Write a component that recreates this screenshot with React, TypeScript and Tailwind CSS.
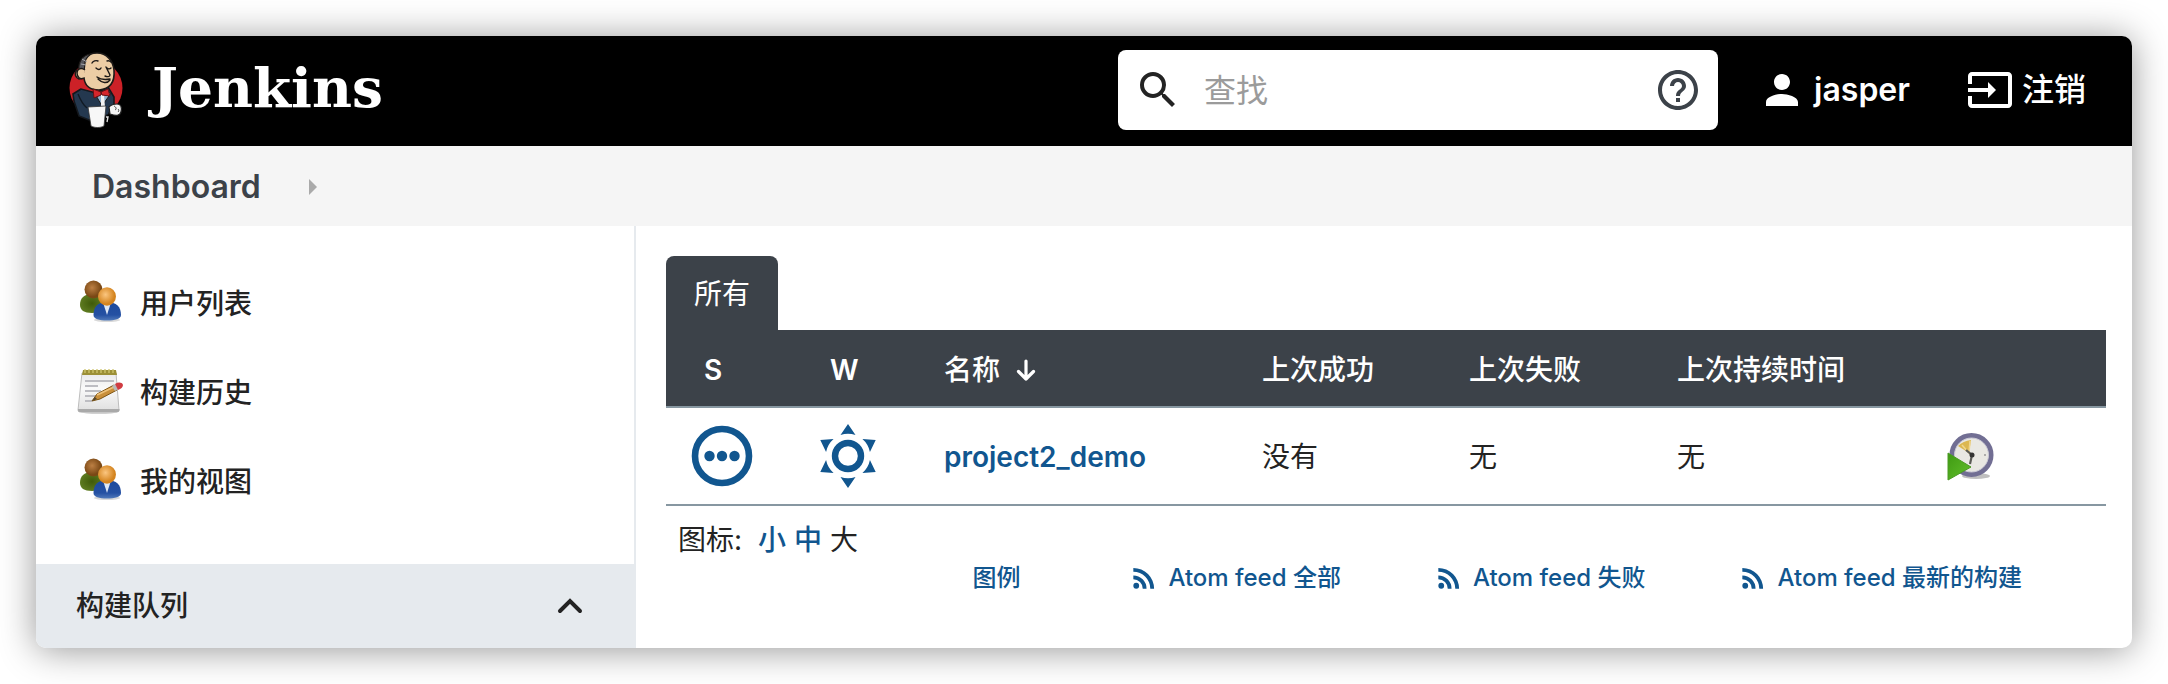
import React from "react";

const LINK = "font-medium text-[#11568f] hover:underline";

function Glyph({ d, className }: { d: string; className: string }) {
  return (
    <svg viewBox="0 0 24 24" fill="currentColor" aria-hidden="true" className={className}>
      <path d={d} />
    </svg>
  );
}

const SEARCH =
  "M15.5 14h-.79l-.28-.27A6.471 6.471 0 0 0 16 9.5 6.5 6.5 0 1 0 9.5 16c1.61 0 3.09-.59 4.23-1.57l.27.28v.79l5 4.99L20.49 19l-4.99-5zm-6 0C7.01 14 5 11.99 5 9.5S7.01 5 9.5 5 14 7.01 14 9.5 11.99 14 9.5 14z";
const HELP =
  "M11 18h2v-2h-2v2zm1-16C6.48 2 2 6.48 2 12s4.48 10 10 10 10-4.48 10-10S17.52 2 12 2zm0 18c-4.41 0-8-3.59-8-8s3.59-8 8-8 8 3.59 8 8-3.59 8-8 8zm0-14c-2.21 0-4 1.79-4 4h2c0-1.1.9-2 2-2s2 .9 2 2c0 2-3 1.75-3 5h2c0-2.25 3-2.5 3-5 0-2.21-1.79-4-4-4z";
const PERSON =
  "M12 12c2.21 0 4-1.79 4-4s-1.79-4-4-4-4 1.79-4 4 1.79 4 4 4zm0 2c-2.67 0-8 1.34-8 4v2h16v-2c0-2.66-5.33-4-8-4z";
const LOGOUT =
  "M21 3.01H3c-1.1 0-2 .9-2 2V9h2V4.99h18v14.03H3V15H1v4.01c0 1.1.9 1.98 2 1.98h18c1.1 0 2-.88 2-1.98v-14c0-1.11-.9-2-2-2zM11 16l4-4-4-4v3H1v2h10v3z";
const RSS =
  "M6.18 15.64a2.18 2.18 0 1 1 0 4.36 2.18 2.18 0 0 1 0-4.36M4 4.44A15.56 15.56 0 0 1 19.56 20h-2.83A12.73 12.73 0 0 0 4 7.27V4.44m0 5.66a9.9 9.9 0 0 1 9.9 9.9h-2.83A7.07 7.07 0 0 0 4 12.93V10.1z";

function Butler() {
  return (
    <svg viewBox="0 0 56 78" aria-hidden="true" className="h-[78px] w-14 shrink-0">
      <ellipse cx="28" cy="37" rx="26.5" ry="27" fill="#cc2127" />
      <path d="M13 38 5 43 6 50 11 65 21 69 36 66 41 62 46 54 46 46 40 36 28 42Z" fill="#24384f" stroke="#14181d" strokeWidth="1.6" />
      <path d="M11 28c-3-1-5-5-3-8l4-1C12 8 20 2 29 2c10 0 16 8 17 17 1 12-4 19-15 20-9 0-14-4-15-12Z" fill="#eccda5" stroke="#1d1a18" strokeWidth="1.6" />
      <path d="M11 19C10 10 15 4 23 3c-4 3-6 6-6 9l-1 9-3 1Z" fill="#55565b" stroke="#1d1a18" strokeWidth="1.2" />
      <path d="m14 8 5 3m-6 2 5 1" stroke="#a5a6aa" strokeWidth="1" />
      <path d="M17 19c-4-3-8-1-8 3s3 7 7 5" fill="#eccda5" stroke="#1d1a18" strokeWidth="1.5" />
      <path d="M24 12c1-2 4-3 6-2m9 0c2-1 3 0 4 1M28 17c2 2 4 2 5 0m6 0c1 1 3 1 4 0M38 16l4 8c0 2-3 2-5 1m-7 3c4 4 9 5 12 1M29 26c4 3 8 3 13 2" fill="none" stroke="#1d1a18" strokeWidth="1.4" strokeLinecap="round" />
      <path d="M26 41 34 55 43 42 38 40Z" fill="#8fb0cd" stroke="#1d1a18" strokeWidth="1" />
      <path d="m33 44 3 0 1 12-4 0Z" fill="#f2f2f2" />
      <path d="m25 38 8 3 0 3-7 3Zm8 3 7-3 2 7-8-1Z" fill="#d6262c" stroke="#641013" strokeWidth="1" />
      <path d="M10 43c2 5 4 10 9 14" fill="none" stroke="#111a24" strokeWidth="1.4" />
      <path d="M19 56h21v7l-18 4Z" fill="#24384f" />
      <path d="M41 56c2-2 5-3 8-3 4 0 5 3 4 8-1 4-5 4-11 2Z" fill="#f4f4f4" stroke="#222" strokeWidth="1.2" />
      <path d="M46 55c2 1 3 3 1 4m3-1c1 1 1 2 0 3" fill="none" stroke="#444" />
      <path d="m20 56 18-1-2 20c-4 2-9 2-13 0Z" fill="#f7f7f7" stroke="#333" strokeWidth=".8" />
      <path d="M38 66h2l-1 5" fill="none" stroke="#ddd" strokeWidth="1.4" />
    </svg>
  );
}

function PeopleIcon({ id }: { id: string }) {
  return (
    <svg viewBox="0 0 48 48" aria-hidden="true" className="size-12 shrink-0">
      <defs>
        <radialGradient id={`${id}-brown`} cx=".42" cy=".4">
          <stop offset="0" stopColor="#bd8044" />
          <stop offset="1" stopColor="#7a4815" />
        </radialGradient>
        <radialGradient id={`${id}-orange`} cx=".42" cy=".4">
          <stop offset="0" stopColor="#fbc680" />
          <stop offset="1" stopColor="#d4841f" />
        </radialGradient>
        <radialGradient id={`${id}-green`}>
          <stop offset="0" stopColor="#3f5a0a" />
          <stop offset="1" stopColor="#5d7a20" />
        </radialGradient>
        <linearGradient id={`${id}-blue`} x2="0" y2="1">
          <stop offset="0" stopColor="#1d4a9c" />
          <stop offset=".7" stopColor="#2551a3" />
          <stop offset="1" stopColor="#5079ba" />
        </linearGradient>
      </defs>
      <ellipse cx="31" cy="41" rx="13" ry="2" fill="#000" opacity=".15" />
      <path d="M4 26c0-7 4-11 12-11s12 4 12 11c0 5-4 8-12 8S4 31 4 26Z" fill={`url(#${id}-green)`} />
      <circle cx="17.5" cy="10.5" r="9" fill={`url(#${id}-brown)`} />
      <path d="M17.500 36c0-8 4-13 13.500-13s14 5 14 13c0 4-6 5.500-14 5.500S17.500 40 17.500 36Z" fill={`url(#${id}-blue)`} />
      <path d="m27.500 25 3.500 11 3.500-11Z" fill="#dfe8f5" />
      <ellipse cx="31" cy="17.5" rx="9" ry="9.2" fill={`url(#${id}-orange)`} />
    </svg>
  );
}

function NotepadIcon() {
  return (
    <svg viewBox="0 0 48 48" aria-hidden="true" className="size-12 shrink-0">
      <defs>
        <linearGradient id="paper" x2="0" y2="1">
          <stop offset="0" stopColor="#e9e9e9" />
          <stop offset=".4" stopColor="#fafafa" />
          <stop offset="1" stopColor="#dedede" />
        </linearGradient>
      </defs>
      <ellipse cx="23" cy="44" rx="18" ry="2" fill="#000" opacity=".18" />
      <path d="M6 5h34l3 37q0 2-2 2H4q-2 0-2-2Z" fill="url(#paper)" stroke="#bdbdbd" />
      <path d="M2 41h41.500v1q0 2-2 2H4q-2 0-2-2Z" fill="#a9a9a9" />
      <path d="M7 2h33l1 5H6Z" fill="#9c9036" />
      <path d="M9 1v4m4-4v4m4-4v4m4-4v4m4-4v4m4-4v4m4-4v4m4-4v4" stroke="#cfc56e" strokeWidth="1.3" />
      <path d="M9 13h29M9 18h13M9 23h16M9 28h11M9 33h7" stroke="#bdbdc2" strokeWidth="1.8" />
      <path d="m16 33 5-7 17-9 3 5-17 9Z" fill="#c98f3a" stroke="#7d5413" strokeWidth="1" />
      <path d="m21 27 17-8" stroke="#eec27a" strokeWidth="1.5" />
      <path d="m16 33 3-4 2 2Z" fill="#51452f" />
      <path d="m36 18 3-2 3 5-3 2Z" fill="#b9b9b9" />
      <path d="M39 16c3-2 7-2 8 1 0 2-2 4-5 5Z" fill="#d03c42" />
    </svg>
  );
}

function ScheduleIcon() {
  return (
    <svg viewBox="0 0 48 48" aria-hidden="true" className="size-12">
      <defs>
        <linearGradient id="play" x2="1" y2="1">
          <stop offset="0" stopColor="#3f9a12" />
          <stop offset="1" stopColor="#62c02c" />
        </linearGradient>
      </defs>
      <ellipse cx="29" cy="43" rx="14" ry="3" fill="#000" opacity=".25" />
      <circle cx="24.5" cy="22" r="19.5" fill="#e9e8e3" stroke="#716e93" strokeWidth="5" />
      <circle cx="24.5" cy="22" r="17" fill="none" stroke="#c9c8d4" strokeWidth="1" />
      <path d="M22 20 11 13q5-5 13-6Z" fill="#dcb750" />
      <path d="m15 12 7 8 1-12" fill="none" stroke="#efd68f" strokeWidth="1.5" />
      <path d="m19 17 6 5-2 9" fill="none" stroke="#5a5a55" strokeWidth="2.2" />
      <circle cx="25" cy="22" r="2.5" fill="#333" />
      <circle cx="38" cy="22" r="1" fill="#999" />
      <path d="M1 20 24 34 1 47Z" fill="url(#play)" stroke="#4a9a24" strokeWidth="1" />
    </svg>
  );
}

function NotBuiltIcon() {
  return (
    <svg viewBox="0 0 64 64" role="img" aria-label="未构建" className="size-16 text-[#11568f]" fill="currentColor">
      <circle cx="32" cy="32" r="27" fill="none" stroke="currentColor" strokeWidth="6.6" />
      <circle cx="19.5" cy="32" r="5.2" />
      <circle cx="32" cy="32" r="5.2" />
      <circle cx="44.5" cy="32" r="5.2" />
    </svg>
  );
}

function SunnyIcon() {
  return (
    <svg viewBox="0 0 64 64" role="img" aria-label="100%" className="size-16 text-[#11568f]" fill="currentColor">
      <circle cx="32" cy="32" r="13" fill="none" stroke="currentColor" strokeWidth="6.4" />
      {[0, 60, 120, 180, 240, 300].map((angle) => (
        <path key={angle} transform={`rotate(${angle} 32 32)`} d="M32 0 39.5 11Q32 8.500 24.500 11Z" />
      ))}
    </svg>
  );
}

const tasks = [
  { label: "用户列表", icon: <PeopleIcon id="people" /> },
  { label: "构建历史", icon: <NotepadIcon /> },
  { label: "我的视图", icon: <PeopleIcon id="views" /> },
];

const feeds = ["Atom feed 全部", "Atom feed 失败", "Atom feed 最新的构建"];

export default function App() {
  return (
    <div className="flex min-h-screen bg-white p-9 font-['Inter','Noto_Sans_CJK_SC',sans-serif] text-[28px] leading-10 text-[#232323]">
      <div className="flex flex-1 flex-col overflow-hidden rounded-[10px] bg-white shadow-[0_2px_36px_rgba(0,0,0,0.42)]">
        <header className="flex h-[110px] items-center bg-black pr-[46px] pb-0.5 pl-8 text-[32px] text-white">
          <a href="#" className="flex items-center gap-7 font-['DejaVu_Serif',serif] text-[55px] font-bold">
            <Butler />
            <span className="pb-1">Jenkins</span>
          </a>
          <form className="ml-auto flex h-20 w-[600px] items-center rounded-lg bg-white px-4" onSubmit={(e) => e.preventDefault()}>
            <Glyph d={SEARCH} className="size-12 shrink-0 text-[#232323]" />
            <input
              type="text"
              aria-label="查找"
              placeholder="查找"
              className="ml-[22px] h-full min-w-0 flex-1 bg-transparent text-[#232323] outline-none placeholder:text-[#9b9b9b]"
            />
            <a href="#" aria-label="帮助">
              <Glyph d={HELP} className="size-12 text-[#3c4249]" />
            </a>
          </form>
          <a href="#" className="ml-10 flex items-center gap-2 font-semibold">
            <Glyph d={PERSON} className="size-12" />
            jasper
          </a>
          <a href="#" className="ml-14 flex items-center gap-2 font-medium">
            <Glyph d={LOGOUT} className="size-12" />
            注销
          </a>
        </header>

        <nav aria-label="Breadcrumb" className="flex h-20 items-center gap-12 bg-[#f5f5f5] pt-0.5 pl-14 text-[32px] font-semibold text-[#3c4249]">
          <a href="#">Dashboard</a>
          <svg viewBox="0 0 8 16" aria-hidden="true" className="h-4 w-2">
            <path d="M0 0 8 8 0 16Z" fill="#aaa" />
          </svg>
        </nav>

        <div className="flex flex-1">
          <aside className="flex w-[600px] shrink-0 flex-col border-r-2 border-[#e6eaee] pt-8">
            <ul className="mb-[39px]">
              {tasks.map((task) => (
                <li key={task.label}>
                  <a href="#" className="flex h-[89px] items-center gap-4 pl-10 font-medium">
                    {task.icon}
                    <span className="pt-0.5">{task.label}</span>
                  </a>
                </li>
              ))}
            </ul>
            <section className="-mr-0.5 flex flex-1 items-center justify-between bg-[#e6eaee] pr-[42px] pl-10">
              <h2 className="font-medium">构建队列</h2>
              <button type="button" aria-label="折叠">
                <svg viewBox="0 0 48 48" aria-hidden="true" className="size-12">
                  <path d="m14 29 10-10 10 10" fill="none" stroke="#232323" strokeWidth="4" strokeLinecap="round" />
                </svg>
              </button>
            </section>
          </aside>

          <main className="min-w-0 flex-1 pt-[30px] pr-[26px] pl-[30px]">
            <div className="flex">
              <a href="#" className="flex h-[74px] items-center rounded-t-lg bg-[#3c4249] px-7 pt-0.5 text-white">
                所有
              </a>
            </div>
            <table className="w-full table-fixed border-collapse text-left">
              <colgroup>
                <col className="w-[126px]" />
                <col className="w-[124px]" />
                <col />
                <col className="w-[207px]" />
                <col className="w-[208px]" />
                <col className="w-[270px]" />
                <col className="w-[187px]" />
              </colgroup>
              <thead>
                <tr className="h-[77px] border-b-2 border-[#8797a1] bg-[#3c4249] text-white">
                  <th className="pt-1 pl-[38px] font-semibold">S</th>
                  <th className="pt-1 pl-[38px] font-semibold">W</th>
                  <th className="pt-1 pl-7 font-medium">
                    <button type="button" className="flex items-center gap-4">
                      名称
                      <svg viewBox="0 0 20 22" aria-hidden="true" className="h-[22px] w-5">
                        <path d="M10 2v18M2.500 12.500 10 20l7.500-7.500" fill="none" stroke="currentColor" strokeWidth="3.2" strokeLinecap="round" strokeLinejoin="round" />
                      </svg>
                    </button>
                  </th>
                  <th className="pt-1 pl-7 font-medium">上次成功</th>
                  <th className="pt-1 pl-7 font-medium">上次失败</th>
                  <th className="pt-1 pl-7 font-medium">上次持续时间</th>
                  <th aria-label="操作" />
                </tr>
              </thead>
              <tbody>
                <tr className="h-[98px] border-b-2 border-[#8797a1]">
                  <td className="pl-6"><NotBuiltIcon /></td>
                  <td className="pl-6"><SunnyIcon /></td>
                  <td className="pt-0.5 pl-7"><a href="#" className="font-semibold text-[#11568f] hover:underline">project2_demo</a></td>
                  <td className="pt-0.5 pl-7">没有</td>
                  <td className="pt-0.5 pl-7">无</td>
                  <td className="pt-0.5 pl-7">无</td>
                  <td className="pt-0.5 pl-7">
                    <button type="button" aria-label="构建" className="block"><ScheduleIcon /></button>
                  </td>
                </tr>
              </tbody>
            </table>
            <div className="mt-[14px] flex gap-2 pl-3">
              <span className="mr-2">图标:</span>
              <a href="#" className={LINK}>小</a>
              <a href="#" className={LINK}>中</a>
              <span>大</span>
            </div>
            <div className="flex justify-end gap-[92px] pr-[84px] text-[24px] leading-9">
              <a href="#" className={`mr-4 ${LINK}`}>图例</a>
              {feeds.map((feed) => (
                <a key={feed} href="#" className={`flex items-center gap-2 ${LINK}`}>
                  <Glyph d={RSS} className="size-8" />
                  {feed}
                </a>
              ))}
            </div>
          </main>
        </div>
      </div>
    </div>
  );
}
